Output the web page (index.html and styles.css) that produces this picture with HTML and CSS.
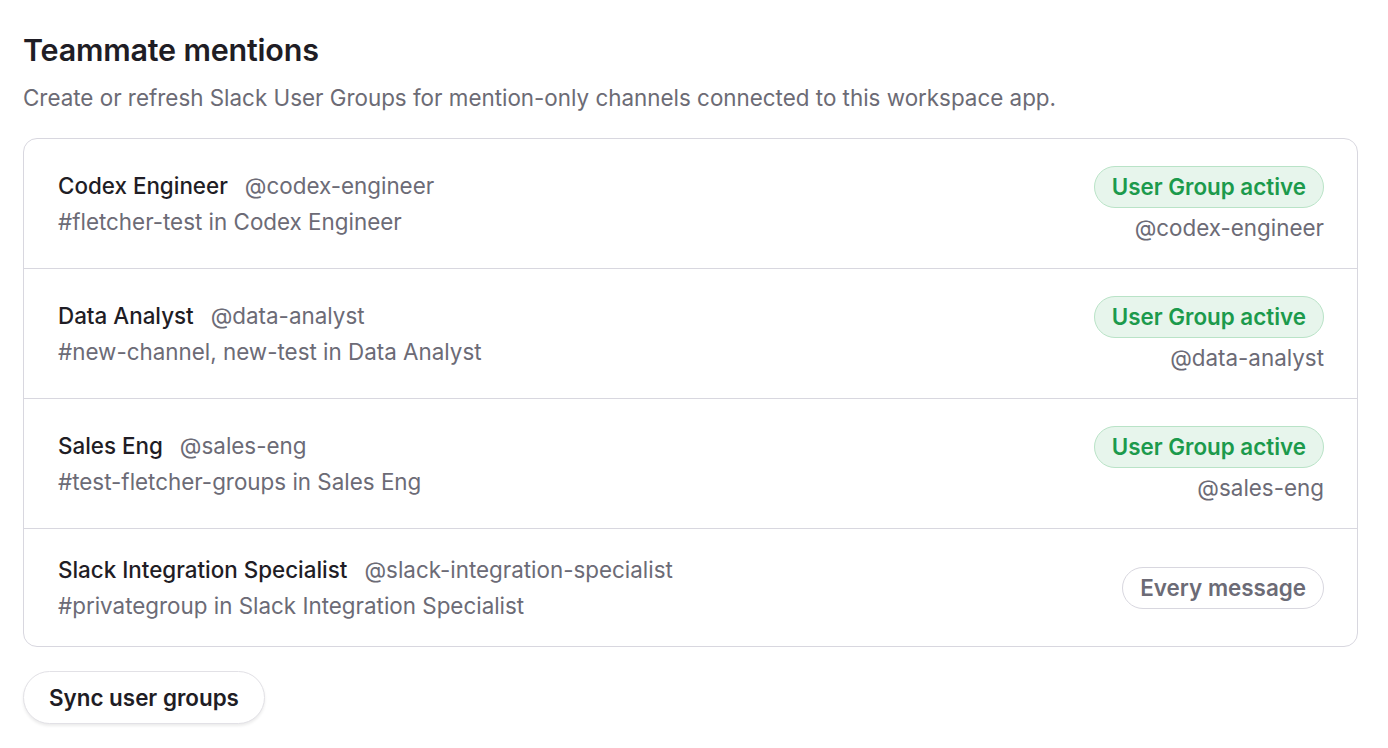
FILE: index.html
```html
<!DOCTYPE html>
<html>
<head>
<meta charset="utf-8">
<link rel="stylesheet" href="styles.css">
</head>
<body>
<main class="page">
  <h1 class="title">Teammate mentions</h1>
  <p class="subtitle">Create or refresh Slack User Groups for mention-only channels connected to this workspace app.</p>
  <div class="card">
    <div class="row">
      <div class="info">
        <div class="line"><span class="name">Codex Engineer</span><span class="handle">@codex-engineer</span></div>
        <div class="channels">#fletcher-test in Codex Engineer</div>
      </div>
      <div class="status">
        <span class="badge active">User Group active</span>
        <span class="group">@codex-engineer</span>
      </div>
    </div>
    <div class="row">
      <div class="info">
        <div class="line"><span class="name">Data Analyst</span><span class="handle">@data-analyst</span></div>
        <div class="channels">#new-channel, new-test in Data Analyst</div>
      </div>
      <div class="status">
        <span class="badge active">User Group active</span>
        <span class="group">@data-analyst</span>
      </div>
    </div>
    <div class="row">
      <div class="info">
        <div class="line"><span class="name">Sales Eng</span><span class="handle">@sales-eng</span></div>
        <div class="channels">#test-fletcher-groups in Sales Eng</div>
      </div>
      <div class="status">
        <span class="badge active">User Group active</span>
        <span class="group">@sales-eng</span>
      </div>
    </div>
    <div class="row">
      <div class="info">
        <div class="line"><span class="name">Slack Integration Specialist</span><span class="handle">@slack-integration-specialist</span></div>
        <div class="channels">#privategroup in Slack Integration Specialist</div>
      </div>
      <div class="status">
        <span class="badge neutral">Every message</span>
      </div>
    </div>
  </div>
  <button class="sync">Sync user groups</button>
</main>
</body>
</html>
```
FILE: styles.css
```css
* { box-sizing: border-box; }
html, body { margin: 0; background: #ffffff; }
body {
  font-family: Inter, "Noto Sans", sans-serif;
  color: #222027;
  -webkit-font-smoothing: antialiased;
}
.page {
  padding: 31px 30px 20px 23px;
}
.title {
  margin: 0;
  font-size: 30.5px;
  line-height: 38px;
  font-weight: 600;
  color: #1f1d25;
  letter-spacing: -0.2px;
}
.subtitle {
  margin: 14px 0 0;
  font-size: 22.4px;
  line-height: 30px;
  color: #6c6b75;
}
.card {
  margin-top: 25px;
  border: 1.5px solid #d8d7df;
  border-radius: 14px;
  overflow: hidden;
}
.row {
  display: flex;
  align-items: center;
  justify-content: space-between;
  padding: 26.5px 33px 26.5px 34px;
  border-top: 1.5px solid #d8d7df;
}
.row:first-child { border-top: none; }
.info {
  display: flex;
  flex-direction: column;
  gap: 8px;
}
.line {
  display: flex;
  gap: 17px;
  font-size: 22.4px;
  line-height: 28px;
}
.name { color: #1f1d25; font-weight: 500; }
.handle { color: #6c6b76; }
.channels {
  font-size: 22.4px;
  line-height: 28px;
  color: #6c6b76;
}
.status {
  display: flex;
  flex-direction: column;
  align-items: flex-end;
  gap: 6px;
}
.badge {
  display: inline-flex;
  align-items: center;
  height: 42px;
  padding: 0 17px;
  border-radius: 21px;
  font-size: 22.4px;
  font-weight: 600;
}
.badge.active {
  background: #e7f5ec;
  border: 1.5px solid #b9e3c7;
  color: #1c9a4c;
}
.badge.neutral {
  background: #ffffff;
  border: 1.5px solid #d8d7df;
  color: #6c6b76;
}
.group {
  font-size: 22.4px;
  line-height: 28px;
  color: #6c6b76;
}
.sync {
  margin-top: 24px;
  height: 53px;
  padding: 0 25px;
  border-radius: 27px;
  border: 1.5px solid #e2e1e6;
  background: #ffffff;
  box-shadow: 0 2px 3px rgba(0,0,0,0.08);
  font-family: inherit;
  font-size: 22.4px;
  font-weight: 600;
  color: #1f1d25;
}
```
